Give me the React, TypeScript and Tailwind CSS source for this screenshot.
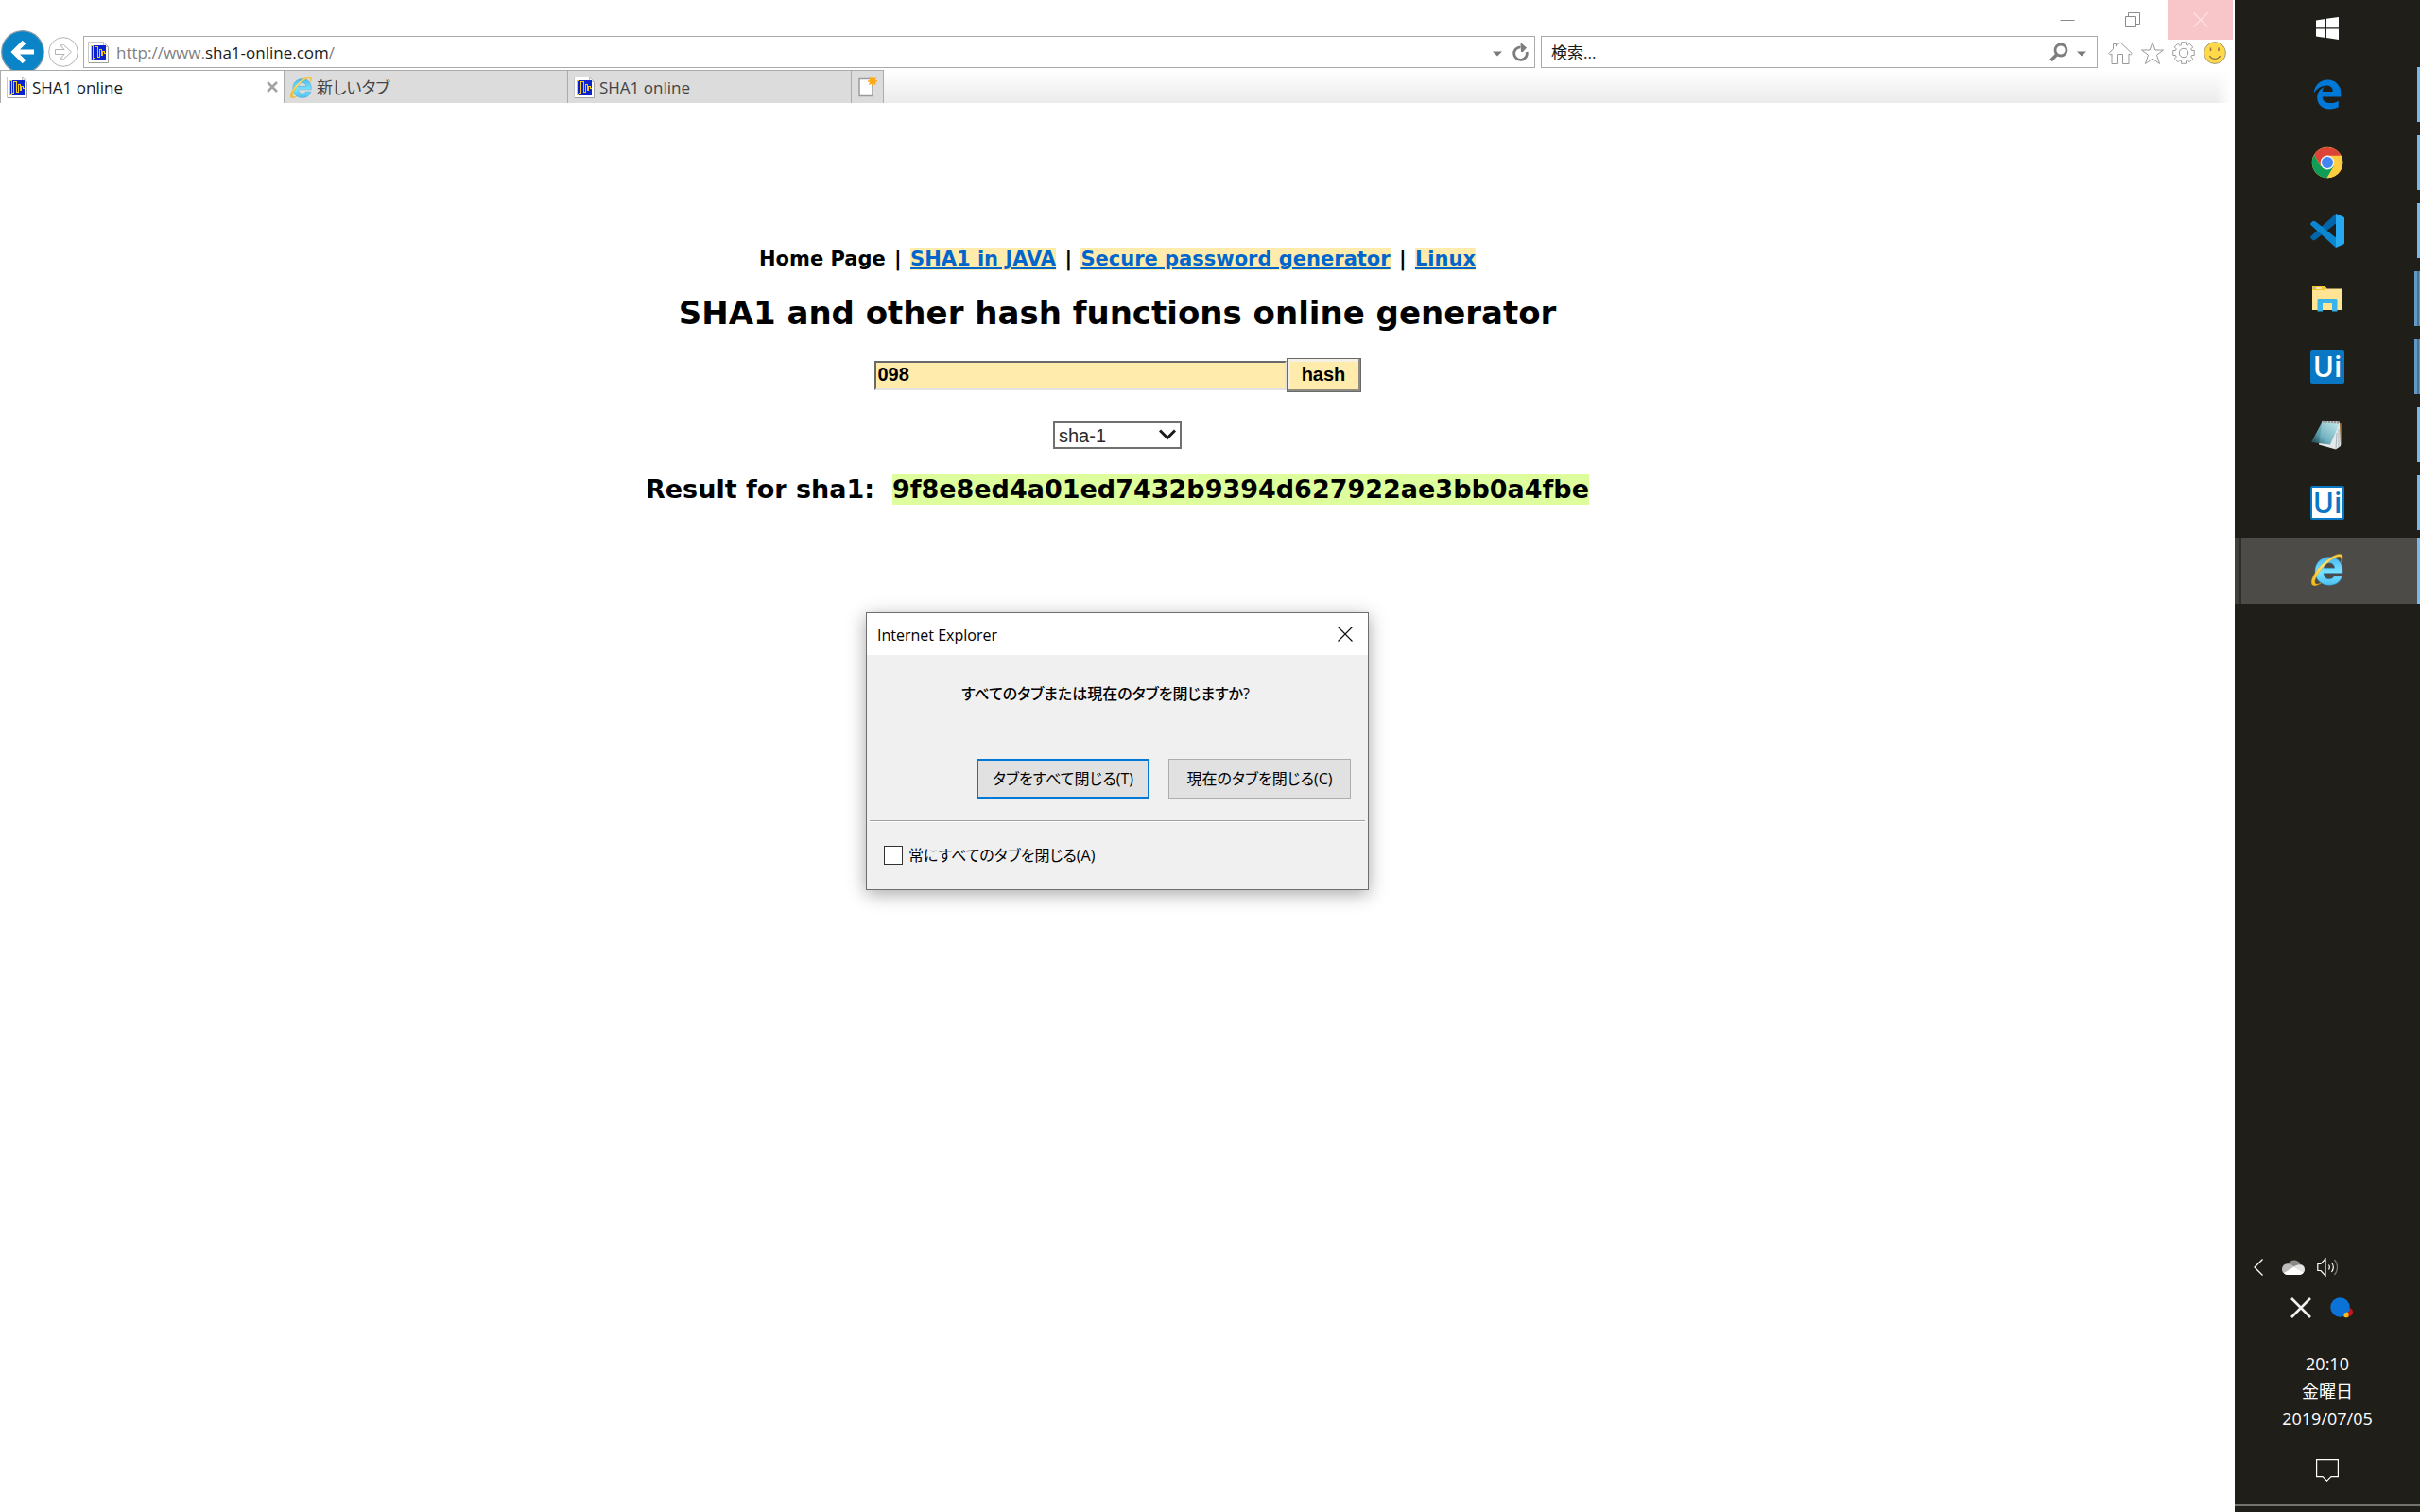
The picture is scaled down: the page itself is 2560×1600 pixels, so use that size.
import type { ReactNode } from "react";
import { FaEdgeLegacy } from "react-icons/fa6";

const ui = "font-['Open_Sans','Noto_Sans_CJK_JP',sans-serif]";

function Favicon() {
  return (
    <svg viewBox="0 0 22 23" className="h-[23px] w-[22px] shrink-0" aria-hidden="true">
      <path d="M.5.5h16l5 5v17H.5z" fill="#fff" stroke="#c9c9c9" />
      <path d="M21.500 6v16.500H1" fill="none" stroke="#a0a0a0" />
      <path d="M16.500.5v5h5z" fill="#eee" stroke="#b5b5b5" strokeWidth=".8" />
      <rect x="3" y="4" width="16" height="16" fill="#0a22cc" />
      <path
        d="M3.500 19.500V4.500h2v15h-2M5.500 17.500h2v-12h3v11h2v-8h2v6h1v-4h1.500v2H19"
        fill="none"
        stroke="#f3cb15"
        shapeRendering="crispEdges"
      />
    </svg>
  );
}

function IeLogo({ id, className }: { id: string; className: string }) {
  return (
    <svg viewBox="0 0 34 34" className={className} aria-hidden="true">
      <defs>
        <linearGradient id={id + "b"} x1="0" y1="0" x2="0" y2="1">
          <stop offset="0" stopColor="#49b9f0" />
          <stop offset=".55" stopColor="#7be2ff" />
          <stop offset="1" stopColor="#4cc0f2" />
        </linearGradient>
        <linearGradient id={id + "y"} x1="1" y1="0" x2="0" y2="1">
          <stop offset="0" stopColor="#f5c53a" />
          <stop offset=".5" stopColor="#ffe37a" />
          <stop offset="1" stopColor="#f3b90c" />
        </linearGradient>
      </defs>
      <path
        d="M33 20.500H13c.2 4.200 2.700 6.300 6 6.300 2.400 0 4.300-1 5.200-3h8.300C30.900 29.600 26 33.200 19 33.200 10.200 33.200 4 27 4 18.500S10.200 3.600 18.700 3.600C28 3.600 34 10 33 20.500zM13.100 15.300h11.700c-.3-3.500-2.500-5.500-5.800-5.500s-5.500 2-5.900 5.500z"
        fill={`url(#${id}b)`}
        stroke="#2b97d6"
        strokeWidth=".5"
      />
      <path
        d="M31.500 9.500c2.400-5 2.300-8.300-.6-9C26-.600 15 6.500 7.500 15.500 1.500 23-1.500 30.500 1.300 33c1.700 1.500 5 .6 9-1.900-3 1.300-5.300 1.500-6.100.3C2.500 29 5.500 22.500 11 16 17.500 8.300 26 2.500 30 3c2 .3 2.300 2.700 1.500 6.500z"
        fill={`url(#${id}y)`}
        stroke="#e0a50f"
        strokeWidth=".4"
      />
    </svg>
  );
}

function Gear() {
  const pts: string[] = [];
  for (let i = 0; i < 8; i++) {
    const a = (i * Math.PI) / 4 - Math.PI / 2;
    for (const [r, o] of [
      [8.8, -0.3],
      [11.5, -0.22],
      [11.5, 0.22],
      [8.8, 0.3],
    ]) {
      pts.push(`${(12 + r * Math.cos(a + o)).toFixed(2)},${(12 + r * Math.sin(a + o)).toFixed(2)}`);
    }
  }
  return (
    <svg viewBox="0 0 24 24" className="size-6" fill="#fff" stroke="#999" strokeLinejoin="round">
      <polygon points={pts.join(" ")} />
      <circle cx="12" cy="12" r="4.700" />
    </svg>
  );
}

function CaptionButtons() {
  return (
    <div className="flex h-[38px] items-start justify-end pr-0.5">
      <button aria-label="Minimize" className="flex h-[42px] w-[69px] items-center justify-center">
        <svg viewBox="0 0 16 16" className="size-4" stroke="#8a8a8a">
          <path d="M.5 8.500h15" />
        </svg>
      </button>
      <button aria-label="Restore" className="mr-[3px] flex h-[42px] w-[69px] items-center justify-center">
        <svg viewBox="0 0 16 16" className="size-4" fill="none" stroke="#8a8a8a">
          <path d="M.5 4.500h11v11H.5zM3.500 4.500v-4h12v12h-4" />
        </svg>
      </button>
      <button aria-label="Close" className="flex h-[42px] w-[69px] items-center justify-center bg-[#f8c5c9]">
        <svg viewBox="0 0 16 16" className="size-4" stroke="#fde3e4" strokeWidth="1.200">
          <path d="M.5.5l15 15M15.500.5l-15 15" />
        </svg>
      </button>
    </div>
  );
}

function Caret() {
  return (
    <svg viewBox="0 0 10 6" className="h-[6px] w-[10px]" fill="#7a7a7a">
      <path d="M0 .5h10L5 5.500z" />
    </svg>
  );
}

function NavRow() {
  return (
    <div className="flex h-[36px] items-start">
      <div className="-mt-[6px] flex h-[42px] w-[50px] shrink-0 items-start overflow-hidden pl-px">
        <button aria-label="Back">
          <svg viewBox="0 0 46 46" className="size-[46px]">
            <circle cx="23" cy="23" r="22.300" fill="#0a84c6" stroke="#8a9aa5" strokeWidth="1.200" />
            <path d="M24.500 12.500L14 23l10.500 10.500M14 23h21" fill="none" stroke="#fff" strokeWidth="5" />
          </svg>
        </button>
      </div>
      <button aria-label="Forward" className="mt-px ml-px">
        <svg viewBox="0 0 32 32" className="size-8" fill="none" stroke="#b3b3b3">
          <circle cx="16" cy="16" r="15.300" />
          <path d="M7.500 13.500h9.500l-4-4.500 3.500-.5 8 7.500-8 7.500-3.500-.5 4-4.500H7.500z" />
        </svg>
      </button>
      <div className="ml-[5px] flex h-[34px] min-w-0 flex-1 items-center border border-[#ababab] bg-white pl-1">
        <Favicon />
        <div
          role="textbox"
          aria-label="Address"
          tabIndex={0}
          className="ml-2 flex-1 truncate pt-0.5 text-[17px] leading-6 text-[#808080]"
        >
          http://www.<span className="text-[#1a1a1a]">sha1-online.com</span>/
        </div>
        <button aria-label="Address history" className="mt-1 mr-[11px]">
          <Caret />
        </button>
        <button aria-label="Refresh" className="mr-[5px]">
          <svg viewBox="0 0 18 20" className="h-5 w-[18px]">
            <path d="M8.500 4.800a6.800 6.800 0 1 0 6.600 5.200" fill="none" stroke="#7d7d7d" strokeWidth="2.800" />
            <path d="M8.500 0l6.500 5.500-4 4.500H9z" fill="#7d7d7d" />
          </svg>
        </button>
      </div>
      <div className="ml-[6px] flex h-[34px] w-[589px] shrink-0 items-center border border-[#ababab] bg-white pr-[11px] pl-[10px]">
        <input
          aria-label="Search"
          placeholder="検索..."
          className="min-w-0 flex-1 pt-0.5 text-[17px] leading-6 text-black outline-none placeholder:text-[#1a1a1a]"
        />
        <button aria-label="Search the web" className="mr-[9px]">
          <svg viewBox="0 0 20 20" className="size-5" fill="none" stroke="#7d7d7d">
            <circle cx="12" cy="8" r="6" strokeWidth="2.800" />
            <path d="M8 12.500L1.500 19" strokeWidth="3.500" />
          </svg>
        </button>
        <button aria-label="Search providers" className="mt-1">
          <Caret />
        </button>
      </div>
      <div className="mt-[6px] mr-[9px] ml-[11px] flex items-center gap-[9px]">
        <button aria-label="Home">
          <svg viewBox="0 0 26 24" className="h-6 w-[26px]" fill="#fff" stroke="#999" strokeLinejoin="round">
            <path d="M13 .8L8.500 5V2.500h-3v5.300L.8 12.500l1.500 1.500 1.700-1v10.500h6.500v-10h5v10H22V13l1.700 1 1.500-1.500z" />
          </svg>
        </button>
        <button aria-label="Favorites">
          <svg viewBox="0 0 24 24" className="size-6" fill="#fff" stroke="#999" strokeLinejoin="round">
            <path d="M12 .8l2.900 8.200h8.600l-7 5.200 3 9.300L12 18.200l-7.500 5.300 3-9.300L.5 9h8.600z" />
          </svg>
        </button>
        <button aria-label="Tools">
          <Gear />
        </button>
        <button aria-label="Send a smile">
          <svg viewBox="0 0 24 24" className="size-6">
            <circle cx="12" cy="12" r="11.400" fill="#ffd94a" stroke="#a09a80" />
            <path d="M7.500 6.500v3.500M16 6.500v3.500" stroke="#8a7640" strokeWidth="1.500" />
            <path d="M6.500 15c2.500 4.500 8.500 4.500 11 0" fill="none" stroke="#8a7640" strokeWidth="1.400" />
          </svg>
        </button>
      </div>
    </div>
  );
}

function Tab({ icon, label, active }: { icon: ReactNode; label: string; active?: boolean }) {
  return (
    <div
      className={
        active
          ? "flex w-[300px] items-center border-t border-l border-[#ababab] bg-white text-[#1a1a1a]"
          : "flex w-[300px] items-center border-t border-l border-[#ababab] bg-[#dcdcdc] text-[#444]"
      }
    >
      <button role="tab" aria-selected={!!active} className="flex flex-1 items-center gap-[5px] pl-[6px] text-left text-[17px] leading-6">
        {icon}
        <span className="pt-0.5">{label}</span>
      </button>
      {active && (
        <button aria-label="Close tab" className="mr-[6px]">
          <svg viewBox="0 0 12 12" className="size-3" stroke="#a3a3a3" strokeWidth="2.600">
            <path d="M1 1l10 10M11 1L1 11" />
          </svg>
        </button>
      )}
    </div>
  );
}

function TabStrip() {
  return (
    <div className="flex h-[35px]">
      <div role="tablist" className="flex">
        <Tab active icon={<Favicon />} label="SHA1 online" />
        <Tab icon={<IeLogo id="tab" className="size-[23px]" />} label="新しいタブ" />
        <Tab icon={<Favicon />} label="SHA1 online" />
      </div>
      <button aria-label="New tab" className="flex w-[35px] items-center justify-center border border-b-0 border-[#ababab] bg-[#dcdcdc]">
        <svg viewBox="0 0 20 22" className="h-[22px] w-5">
          <path d="M1 2.500h14v18H1z" fill="#fff" stroke="#9a9a9a" strokeWidth="1.500" />
          <path d="M15 0v10M10 5h10M11.500 1.500l7 7M18.500 1.500l-7 7" stroke="#f7a823" strokeWidth="1.600" />
          <circle cx="15" cy="5" r="3.300" fill="#fba919" />
        </svg>
      </button>
      <div className="mr-1 flex-1 bg-linear-to-b from-white to-[#ebebeb] [mask-image:linear-gradient(to_right,black_calc(100%-16px),transparent)]" />
    </div>
  );
}

function PageLink({ children }: { children: ReactNode }) {
  return (
    <a href="#" className="bg-[#ffebac] text-[#0066cc] underline decoration-2 underline-offset-2">
      {children}
    </a>
  );
}

function Bar() {
  return <span className="mx-[2px]"> | </span>;
}

function WebPage() {
  return (
    <main className="flex flex-1 flex-col items-center pt-[152px] font-['DejaVu_Sans',sans-serif] font-bold text-black">
      <nav className="text-[21px] leading-[26px] whitespace-pre">
        Home Page
        <Bar />
        <PageLink>SHA1 in JAVA</PageLink>
        <Bar />
        <PageLink>Secure password generator</PageLink>
        <Bar />
        <PageLink>Linux</PageLink>
      </nav>
      <h1 className="mt-[24px] text-[34px] leading-10">SHA1 and other hash functions online generator</h1>
      <form className="mt-[28px] flex flex-col items-center font-['Liberation_Sans',sans-serif]" onSubmit={(e) => e.preventDefault()}>
        <div className="flex items-center">
          <input
            aria-label="Text to hash"
            defaultValue="098"
            className="h-[31px] w-[436px] border-2 border-t-[#696969] border-r-[#e3e3e3] border-b-[#e3e3e3] border-l-[#696969] bg-[#ffebac] pb-0.5 pl-[2px] text-[20px] leading-6 outline-none"
          />
          <button className="h-[36px] w-[79px] border border-[#696969] bg-[#ffebac] pb-0.5 text-[20px] leading-6 shadow-[inset_-2px_-2px_#8f8b80,inset_3px_3px_#f4f0e4]">
            hash
          </button>
        </div>
        <div className="relative mt-[31px] w-[136px] font-normal">
          <select
            aria-label="Hash function"
            className="block h-[29px] w-full appearance-none border-2 border-[#707070] bg-white pl-1 text-[20px] leading-6 text-[#2a2a2a]"
          >
            <option>sha-1</option>
          </select>
          <svg viewBox="0 0 18 12" className="pointer-events-none absolute top-2 right-[6px] h-3 w-[18px]" fill="none" stroke="#1a1a1a" strokeWidth="3">
            <path d="M1 1.500l8 8 8-8" />
          </svg>
        </div>
      </form>
      <p className="mt-[27px] text-[27px] leading-8 whitespace-pre">
        Result for sha1:{"  "}
        <span className="inline-block bg-[#defd9c]">9f8e8ed4a01ed7432b9394d627922ae3bb0a4fbe</span>
      </p>
    </main>
  );
}

function CloseTabsDialog() {
  return (
    <div
      role="dialog"
      aria-labelledby="dlg-title"
      className="absolute top-[648px] left-1/2 flex w-[532px] -translate-x-1/2 flex-col border border-[#6e6e6e] bg-[#f0f0f0] text-[16px] leading-6 text-black shadow-[0_4px_18px_rgba(0,0,0,0.35)]"
    >
      <div className="flex h-[44px] items-center justify-between bg-white pr-4 pl-[11px]">
        <h2 id="dlg-title" className="pt-px">Internet Explorer</h2>
        <button aria-label="Close dialog">
          <svg viewBox="0 0 16 16" className="size-4" stroke="#111" strokeWidth="1.200">
            <path d="M.5.5l15 15M15.500.5l-15 15" />
          </svg>
        </button>
      </div>
      <p className="mt-[29px] pl-[100px] font-medium">すべてのタブまたは現在のタブを閉じますか?</p>
      <div className="mt-[57px] flex justify-end gap-5 pr-[18px]">
        <button className="h-[42px] w-[183px] border-2 border-[#0078d7] bg-[#e1e1e1]">タブをすべて閉じる(T)</button>
        <button className="h-[42px] w-[193px] border border-[#adadad] bg-[#e1e1e1]">現在のタブを閉じる(C)</button>
      </div>
      <hr className="mx-[3px] mt-[23px] h-[2px] border-t border-b border-t-[#a0a0a0] border-b-white" />
      <label className="mt-[23px] mb-6 flex items-center gap-[6px] pl-[18px]">
        <input type="checkbox" className="size-5 appearance-none border border-[#333] bg-white" />
        常にすべてのタブを閉じる(A)
      </label>
    </div>
  );
}

function WindowsLogo() {
  return (
    <svg viewBox="0 0 24 24" className="size-6" fill="#fff">
      <path d="M0 3.400L9.900 2v9.300H0zM11 1.800L24 0v11.300H11zM0 12.500h9.900v9.400L0 20.600zM11 12.500h13V24l-13-1.900z" />
    </svg>
  );
}

function ChromeLogo() {
  return (
    <svg viewBox="0 0 48 48" className="size-[34px]">
      <circle cx="24" cy="24" r="23" fill="#ffcd40" />
      <path d="M24 24L44.200 13.500A23 23 0 0 0 4.300 12.300L13.500 28z" fill="#db4437" />
      <path d="M24 24L13.700 29 4.300 12.300A23 23 0 0 0 23.500 47L34 29z" fill="#0f9d58" />
      <path d="M24 24l10 5-10.500 18A23 23 0 0 0 44.600 13.600H24z" fill="#ffcd40" />
      <circle cx="24" cy="24" r="10.500" fill="#f1f1f1" />
      <circle cx="24" cy="24" r="8.500" fill="#4285f4" />
    </svg>
  );
}

function CodeLogo() {
  return (
    <svg viewBox="0 0 36 36" className="size-9">
      <path d="M27 0L1 23.500c-1.200 1-1.200 2 0 3l1.300 1.200c.8.8 2 .8 3 .1L27 10.500z" fill="#0065a9" />
      <path d="M27 36L1 12.500c-1.200-1-1.200-2 0-3l1.300-1.200c.8-.8 2-.8 3-.1L27 25.500z" fill="#0b86cf" />
      <path d="M27 0l8 3.500c.7.400 1 .9 1 1.700v25.600c0 .8-.3 1.300-1 1.700L27 36z" fill="#27a9f2" />
    </svg>
  );
}

function FolderLogo() {
  return (
    <svg viewBox="0 0 32 27" className="h-[27px] w-8">
      <path d="M0 1c0-.6.400-1 1-1h12.500l2 2.500H31c.6 0 1 .4 1 1V25H0z" fill="#ffe493" />
      <path d="M0 1c0-.6.400-1 1-1h12.500l1.500 2-1.500 2H0z" fill="#f9c22f" />
      <path d="M2 2h8" stroke="#fff" strokeWidth="1.200" />
      <path d="M2 2h2" stroke="#2d9ad8" strokeWidth="1.200" />
      <path d="M5.500 26.500V14.500c0-1 .5-1.500 1.500-1.500h18c1 0 1.500.5 1.500 1.500v12h-5.500V18H11v8.500z" fill="#39b4ea" />
    </svg>
  );
}

function NotepadLogo() {
  return (
    <svg viewBox="0 0 34 32" className="h-8 w-[34px]">
      <defs>
        <linearGradient id="np" x1="0" y1="1" x2="1" y2="0">
          <stop offset="0" stopColor="#173f4a" />
          <stop offset=".35" stopColor="#5fa9b8" />
          <stop offset="1" stopColor="#cdeef2" />
        </linearGradient>
      </defs>
      <path d="M29 3.500l3.500 1v22l-4 1z" fill="#8a5a1c" />
      <path d="M11.500 1.500L30 3.500 31 28l-5 3.500L8 26.500z" fill="#e3e9ea" />
      <path d="M27 14l-1 17M29 10v19" stroke="#a9b4b8" />
      <path d="M12 1.500l18 2.500-10 22.500L0 24z" fill="url(#np)" opacity=".9" />
      <path d="M12 1.500h17.500v3L12 3.500z" fill="#c4c8c8" />
      <path d="M13 .5v3M16 .7v3M19 .9v3M22 1.100v3M25 1.300v3M28 1.500v3" stroke="#666" />
    </svg>
  );
}

function UiLogo({ inverted }: { inverted?: boolean }) {
  return (
    <span
      className={
        inverted
          ? "flex size-9 items-center justify-center rounded-xs border-2 border-[#0a77c4] bg-white text-[30px] leading-9 font-semibold text-[#0a77c4]"
          : "flex size-9 items-center justify-center rounded-xs bg-[#0a77c4] text-[30px] leading-9 font-semibold text-white"
      }
    >
      Ui
    </span>
  );
}

type Mark = "one" | "many";

function TaskItem({ label, mark, active, children }: { label: string; mark: Mark; active?: boolean; children: ReactNode }) {
  return (
    <button aria-label={label} className="relative flex h-[72px] w-full items-center justify-center py-px">
      <span
        className={
          active
            ? "flex h-full flex-1 items-center justify-center border-l-[5px] border-[#403f3b] bg-[#4c4b47] pr-[5px] pb-[3px] shadow-[inset_2px_0_#2e2d2a]"
            : "flex h-full flex-1 items-center justify-center"
        }
      >
        {children}
      </span>
      {mark === "one" && (
        <span className={active ? "absolute inset-y-px right-0 w-[3px] bg-[#76b9ed]" : "absolute inset-y-[7px] right-0 w-[3px] bg-[#76b9ed]"} />
      )}
      {mark === "many" && (
        <span className="absolute inset-y-[7px] right-0 flex w-[6px]">
          <span className="w-[3px] bg-[#6099c6]" />
          <span className="w-[2px] bg-[#4a7293]" />
          <span className="w-px bg-[#6099c6]" />
        </span>
      )}
    </button>
  );
}

function Taskbar() {
  return (
    <aside className="flex w-[196px] shrink-0 flex-col bg-[#1f1e19] text-white">
      <button aria-label="Start" className="flex h-[64px] items-center justify-center pb-1">
        <WindowsLogo />
      </button>
      <TaskItem label="Edge" mark="one">
        <FaEdgeLegacy className="size-8 text-[#0078d7]" />
      </TaskItem>
      <TaskItem label="Chrome" mark="one">
        <ChromeLogo />
      </TaskItem>
      <TaskItem label="Visual Studio Code" mark="one">
        <CodeLogo />
      </TaskItem>
      <TaskItem label="Explorer" mark="many">
        <FolderLogo />
      </TaskItem>
      <TaskItem label="UiPath Studio" mark="many">
        <UiLogo />
      </TaskItem>
      <TaskItem label="Notepad" mark="one">
        <NotepadLogo />
      </TaskItem>
      <TaskItem label="UiPath Robot" mark="one">
        <UiLogo inverted />
      </TaskItem>
      <TaskItem label="Internet Explorer" mark="one" active>
        <IeLogo id="bar" className="size-[34px]" />
      </TaskItem>

      <div className="mt-auto flex h-5 items-center pl-5">
        <button aria-label="Show hidden icons">
          <svg viewBox="0 0 10 18" className="h-[18px] w-[10px]" fill="none" stroke="#fff" strokeWidth="1.300">
            <path d="M9.500.5L1 9l8.500 8.500" />
          </svg>
        </button>
        <button aria-label="OneDrive" className="ml-5">
          <svg viewBox="0 0 24 16" className="h-4 w-6">
            <path d="M6 5.500C7.500 1.500 11 0 14 .5c3 .5 5 2.500 5.500 5l-7 4z" fill="#8b8a88" />
            <path d="M4.500 15C1.500 15 0 13 0 10s2.500-6 6-5.800c2.300 0 4 1 7 3L6 15z" fill="#bdbcba" />
            <path d="M19 5.300c3 0 5 2 5 5 0 2.700-1.500 5-5 5L11 8.300c2-1.500 5-3 8-3z" fill="#e3e3e2" />
            <path d="M2 14l10-6 10.500 5.500C22 15 20.500 16 19 16H5c-1.300 0-2.300-.7-3-2z" fill="#fff" />
          </svg>
        </button>
        <button aria-label="Volume" className="ml-[13px]">
          <svg viewBox="0 0 23 20" className="h-5 w-[23px]" fill="none" stroke="#fff" strokeWidth="1.200">
            <path d="M.8 6.500H4L9 1v18L4 13.500H.8zM12.500 7.500c1 1.500 1 3.500 0 5M15.500 5c2.200 3 2.200 7 0 10" />
            <path d="M18.500 2c4 4.500 4 11.500 0 16" stroke="#777672" />
          </svg>
        </button>
      </div>
      <div className="mt-[22px] flex items-center gap-[20px] pl-[59px]">
        <svg viewBox="0 0 22 22" className="size-[22px]" stroke="#f0f0f0" strokeWidth="2.600">
          <path d="M1 1l20 20M21 1L1 21" />
        </svg>
        <svg viewBox="0 0 24 22" className="h-[22px] w-6">
          <circle cx="19.500" cy="15.500" r="4.500" fill="#c8161d" />
          <circle cx="10.500" cy="10.500" r="10.200" fill="#0b72d8" />
          <path d="M14.500 17l3-1.500 2 1v4l-2.500 1-2.500-1z" fill="#fdbb18" />
        </svg>
      </div>
      <div className="mt-[34px] flex flex-col items-center text-[18px] leading-[29px]">
        <span>20:10</span>
        <span>金曜日</span>
        <span>2019/07/05</span>
      </div>
      <button aria-label="Notifications" className="mt-[28px] self-center">
        <svg viewBox="0 0 24 24" className="size-6" fill="none" stroke="#fff" strokeWidth="1.200">
          <path d="M.6.600h22.800v18H16l-4.500 4.500L7 18.600H.6z" />
        </svg>
      </button>
      <div className="mt-6 mb-[6px] h-[2px] bg-[#74736f]" />
    </aside>
  );
}

export default function App() {
  return (
    <div className={`flex min-h-screen bg-white [font-feature-settings:'palt'] ${ui}`}>
      <div className="relative flex min-w-0 flex-1 flex-col">
        <header>
          <CaptionButtons />
          <NavRow />
          <TabStrip />
        </header>
        <WebPage />
        <CloseTabsDialog />
      </div>
      <Taskbar />
    </div>
  );
}
